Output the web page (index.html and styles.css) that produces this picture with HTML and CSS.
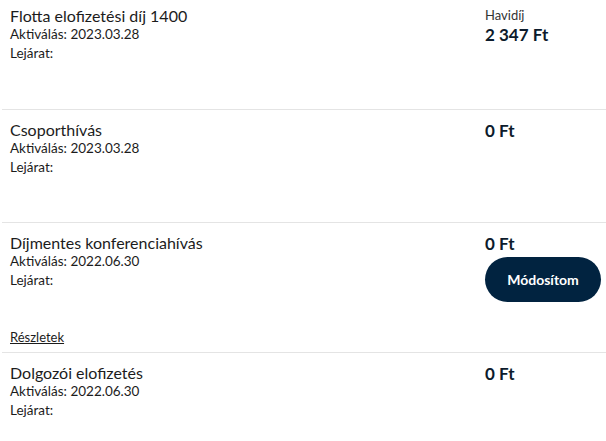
FILE: index.html
```html
<!DOCTYPE html>
<html lang="hu">
<head>
    <meta charset="UTF-8">
    <meta name="viewport" content="width=device-width, initial-scale=1.0">
    <title>Díjcsomagok</title>
    <link rel="stylesheet" href="styles.css">
</head>
<body>
    <div class="service-list">
        <div class="service first">
            <div class="info">
                <div class="name">Flotta elofizetési díj 1400</div>
                <div class="meta">Aktiválás: 2023.03.28</div>
                <div class="meta">Lejárat:</div>
            </div>
            <div class="price">
                <div class="price-label">Havidíj</div>
                <div class="amount">2 347 Ft</div>
            </div>
        </div>

        <div class="service">
            <div class="info">
                <div class="name">Csoporthívás</div>
                <div class="meta">Aktiválás: 2023.03.28</div>
                <div class="meta">Lejárat:</div>
            </div>
            <div class="price">
                <div class="amount">0 Ft</div>
            </div>
        </div>

        <div class="service with-details">
            <div class="info">
                <div class="name">Díjmentes konferenciahívás</div>
                <div class="meta">Aktiválás: 2022.06.30</div>
                <div class="meta">Lejárat:</div>
            </div>
            <div class="price">
                <div class="amount">0 Ft</div>
                <button class="modify-btn">Módosítom</button>
            </div>
            <a href="#" class="details-link">Részletek</a>
        </div>

        <div class="service last">
            <div class="info">
                <div class="name">Dolgozói elofizetés</div>
                <div class="meta">Aktiválás: 2022.06.30</div>
                <div class="meta">Lejárat:</div>
            </div>
            <div class="price">
                <div class="amount">0 Ft</div>
            </div>
        </div>
    </div>
</body>
</html>
```

FILE: styles.css
```css
body {
    margin: 0;
    padding: 0;
    font-family: Lato, "Noto Sans", Arial, sans-serif;
    color: #1c1c1c;
    background-color: #fff;
}

.service-list {
    margin-left: 2px;
}

.service {
    display: grid;
    grid-template-columns: 1fr 116px;
    grid-template-rows: auto 1fr;
    box-sizing: border-box;
    min-height: 113px;
    padding: 10px 5px 0 8px;
    border-bottom: 1px solid #e4e4e4;
}

.service.first {
    min-height: 110px;
    padding-top: 6px;
}

.service.with-details {
    min-height: 130px;
}

.service.last {
    min-height: 0;
    border-bottom: none;
}

.name {
    font-size: 16px;
    line-height: 19px;
}

.meta {
    font-size: 13.5px;
    line-height: 19px;
}

.price-label {
    font-size: 13px;
    line-height: 18px;
    color: #333;
}

.amount {
    font-size: 17px;
    line-height: 22px;
    font-weight: bold;
    color: #0c1b2c;
}

.modify-btn {
    display: block;
    margin-top: 2px;
    width: 116px;
    height: 45px;
    border: none;
    border-radius: 23px;
    background-color: #012340;
    color: #fff;
    font-family: inherit;
    font-size: 14px;
    font-weight: bold;
    cursor: pointer;
}

.details-link {
    grid-column: 1 / 3;
    align-self: end;
    margin-bottom: 6px;
    font-size: 13px;
    line-height: 18px;
    color: #1c1c1c;
}
```
